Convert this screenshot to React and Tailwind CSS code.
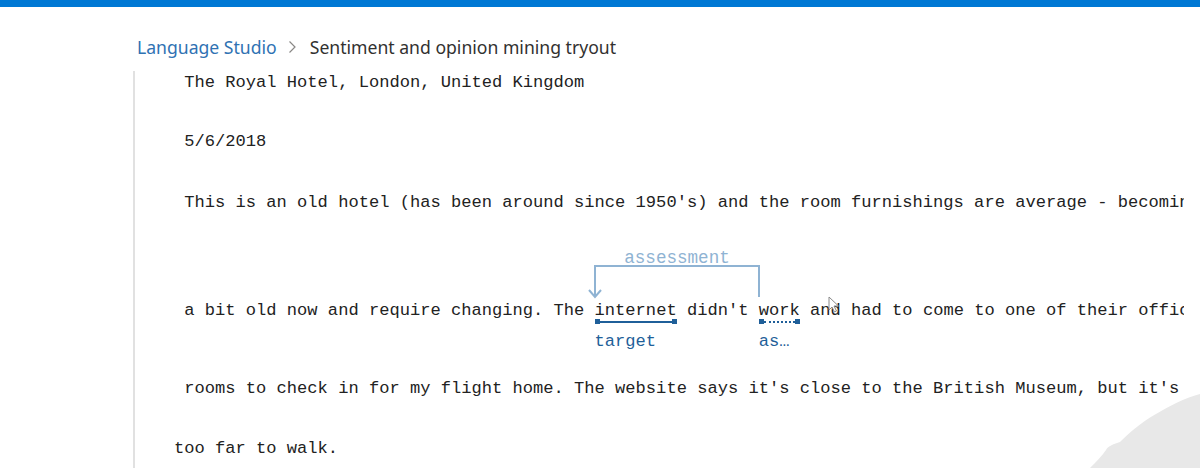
import React from 'react';

const mono = { fontFamily: '"Liberation Mono", "DejaVu Sans Mono", monospace' };

// a word that carries a marker line and a short label under it
function Tagged({ word, label, dotted }) {
  return (
    <span className="relative inline-block">
      {word}
      <span className="absolute left-0 right-0 top-[20px] flex items-center">
        <span className="w-[5px] h-[5px] bg-[#1f5f99] shrink-0" />
        {dotted ? (
          <span className="flex-1 border-t-2 border-dotted border-[#1f5f99]" />
        ) : (
          <span className="flex-1 h-[2px] bg-[#1f5f99]" />
        )}
        <span className="w-[5px] h-[5px] bg-[#1f5f99] shrink-0" />
      </span>
      <span className="absolute left-0 top-[31px] text-[#1f5f99] whitespace-nowrap">{label}</span>
    </span>
  );
}

export default function App() {
  return (
    <div className="relative w-[1200px] h-[468px] overflow-hidden bg-white">
      <div className="h-[7px] bg-[#0078d4]" />

      {/* Breadcrumb */}
      <div
        className="flex items-center pl-[137px] pt-[25px] h-[55px] text-[17.6px] leading-[24px]"
        style={{ fontFamily: '"Noto Sans", "Open Sans", sans-serif' }}
      >
        <span className="text-[#2f72b3]">Language Studio</span>
        <svg className="ml-[11px] mr-[13px] text-[#8a8886]" width="9" height="14" viewBox="0 0 9 14" fill="none">
          <path d="M1.5 1.5 L7 7 L1.5 12.5" stroke="currentColor" strokeWidth="1.2" />
        </svg>
        <span className="text-[#323130]">Sentiment and opinion mining tryout</span>
      </div>

      {/* Document text */}
      <div
        className="ml-[133px] mt-[9px] w-[1051px] overflow-hidden border-l-2 border-[#e1e1e1] h-[400px] pl-[39px] text-[17.1px] leading-[24px] text-[#222] whitespace-pre"
        style={mono}
      >
        <div> The Royal Hotel, London, United Kingdom</div>
        <div className="mt-[35px]"> 5/6/2018</div>
        <div className="mt-[37px]"> This is an old hotel (has been around since 1950's) and the room furnishings are average - becoming</div>

        <div className="relative mt-[84px]">
          {/* assessment bracket */}
          <div className="absolute left-[420px] top-[-34px] w-[166px] h-[32px] border-t-2 border-x-2 border-[#8fb3d3]">
            <div className="absolute left-0 right-0 -top-[19px] text-center text-[17.6px] leading-[20px] text-[#8fb3d3]">
              assessment
            </div>
            <svg className="absolute -left-[8px] top-[18px]" width="14" height="14" viewBox="0 0 14 14" fill="none">
              <path d="M1 5 L7 12 L13 5" stroke="#8fb3d3" strokeWidth="2" />
            </svg>
          </div>
          {' a bit old now and require changing. The '}
          <Tagged word="internet" label="target" />
          {" didn't "}
          <Tagged word="work" label="as…" dotted />
          {' and had to come to one of their offices'}
          {/* mouse pointer */}
          <svg className="absolute left-[654px] top-[-3px]" width="12" height="17" viewBox="0 0 12 17" fill="none">
            <path d="M1 1 L1 14 L4 11 L6.5 16 L8.5 15 L6 10 L10.5 10 Z" fill="white" stroke="#8a8a8a" strokeWidth="1" />
          </svg>
        </div>

        <div className="mt-[54px]"> rooms to check in for my flight home. The website says it's close to the British Museum, but it's</div>
        <div className="mt-[36px]">too far to walk.</div>
      </div>

      {/* background shape, bottom right */}
      <svg className="absolute right-0 bottom-0" width="110" height="76" viewBox="0 0 110 76" fill="none">
        <path
          d="M0 76 C6 70 12 64 16 58 C18 54 24 52 30 50 C40 40 52 30 66 22 C80 14 94 6 110 2 L110 76 Z"
          fill="#e8e8e8"
        />
      </svg>
    </div>
  );
}
